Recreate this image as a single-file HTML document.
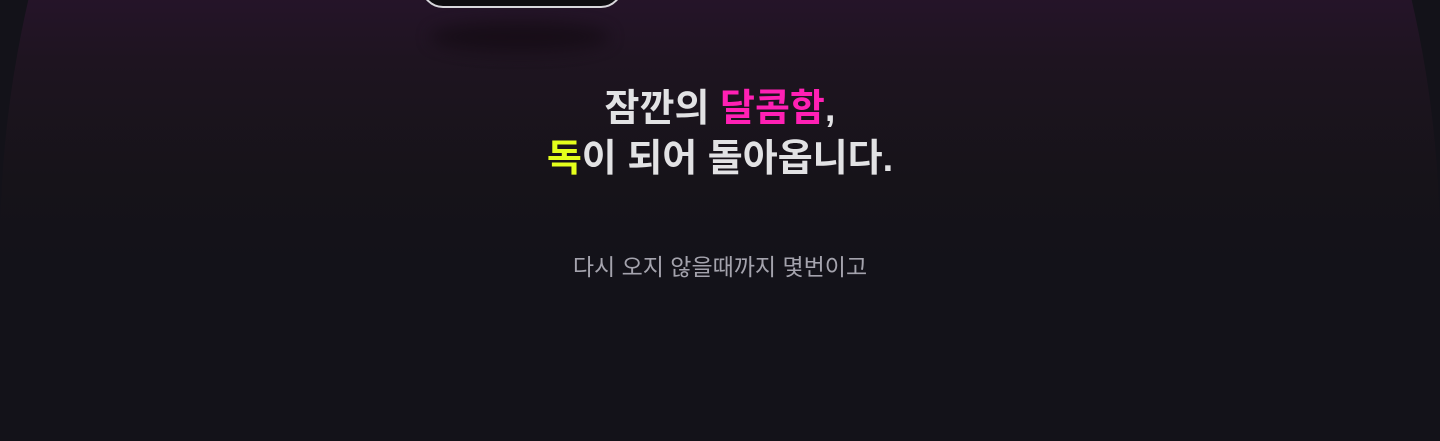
<!DOCTYPE html>
<html><head><meta charset="utf-8"><style>
html,body{margin:0;padding:0;width:1440px;height:441px;overflow:hidden}
body{background:#131219;font-family:"Liberation Sans","Noto Sans CJK KR",sans-serif}
.clip{position:relative;width:1440px;height:441px;overflow:hidden}
.glow{position:absolute;left:0;top:-650px;width:1440px;height:1800px;border-radius:50%;
background:linear-gradient(180deg,#26142a 0,#26142a 640px,#1e1420 710px,#161319 830px,#131219 910px);}
.phone{position:absolute;left:421px;top:-42px;width:198px;height:46px;border:2px solid #d8d8dc;border-radius:22px;background:#0e0d10}
.shadow{position:absolute;left:430px;top:22px;width:180px;height:30px;border-radius:50%;background:#150c15;filter:blur(8px);opacity:.8}
.h{position:absolute;left:0;width:1440px;text-align:center;font-weight:700;font-size:38px;color:#e2e2e4;line-height:50px}
.p{color:#ff20b4}.y{color:#e4ff1c}
.s{position:absolute;left:0;width:1440px;text-align:center;top:252px;font-size:23px;color:#a4a3ad;line-height:30px}
</style></head><body><div class="clip">
<div class="glow"></div>
<div class="shadow"></div>
<div class="phone"></div>
<div class="h" style="top:84px">잠깐의 <span class="p">달콤함</span>,</div>
<div class="h" style="top:134px"><span class="y">독</span>이 되어 돌아옵니다.</div>
<div class="s">다시 오지 않을때까지 몇번이고</div>
</div></body></html>
